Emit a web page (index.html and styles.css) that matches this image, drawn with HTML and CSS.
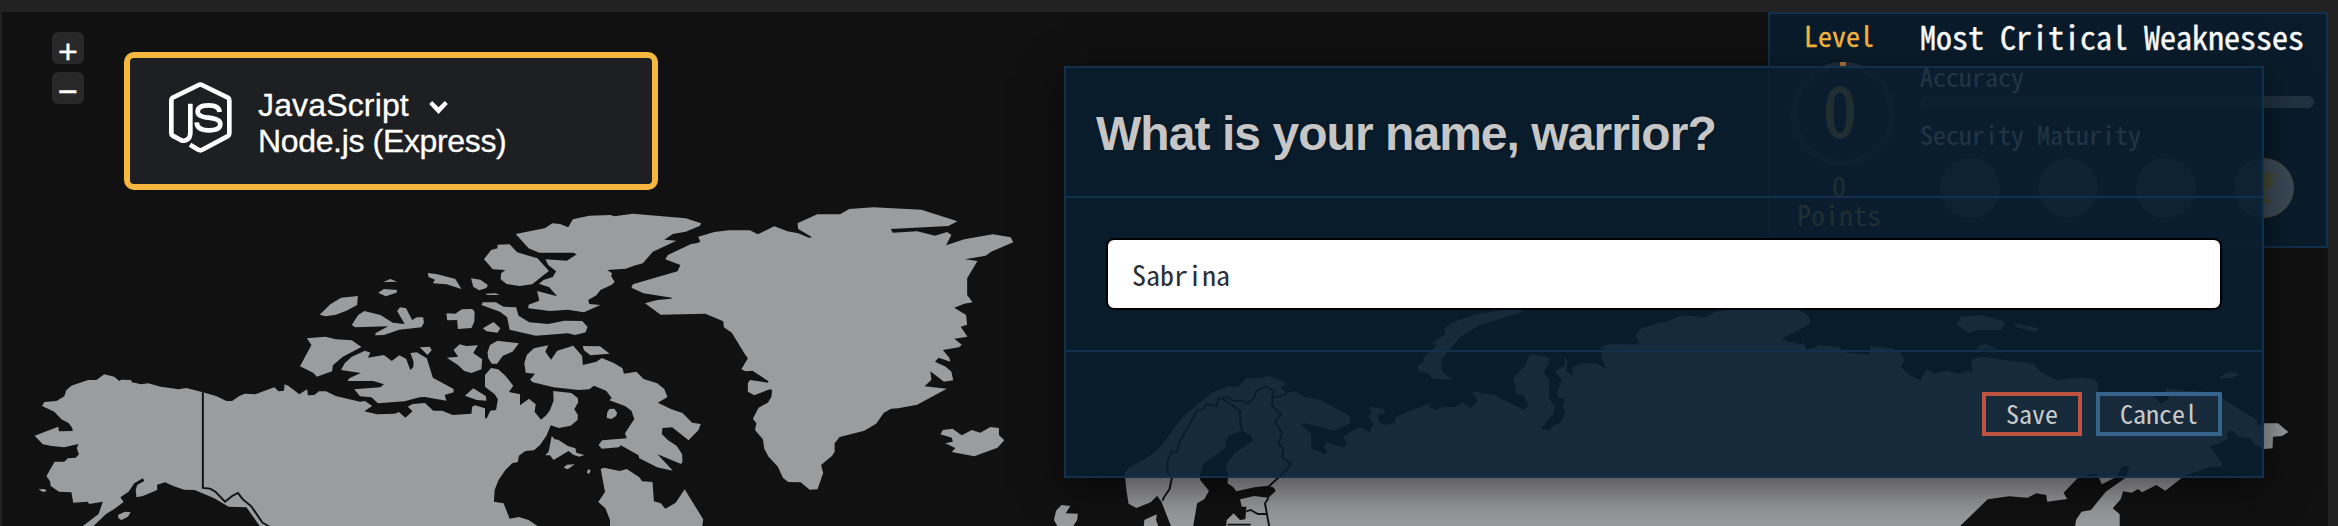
FILE: index.html
```html
<!DOCTYPE html>
<html lang="en">
<head>
<meta charset="utf-8">
<title>Warrior map</title>
<link rel="stylesheet" href="styles.css">
</head>
<body>
<main class="stage">
  <svg class="map" viewBox="0 0 2338 526" aria-hidden="true">
    <g transform="translate(0 190) scale(.357143 .333333)">
      <path class="land" d="M97,737 163,710 165,724 204,723 202,713 192,699 172,688 152,665 118,648 124,636 158,633 180,619 186,600 200,587 220,580 247,570 270,570 292,553 320,560 334,573 340,569 366,570 370,577 395,583 415,580 450,590 500,598 522,594 568,607 605,618 634,633 650,633 670,618 685,611 715,613 768,592 780,604 795,602 797,583 808,588 838,613 860,598 862,616 880,615 893,604 913,604 940,618 1008,635 1022,633 1042,648 1020,664 1055,673 1105,671 1117,666 1135,683 1155,664 1142,650 1155,642 1190,639 1213,662 1238,662 1268,675 1320,671 1322,650 1330,646 1358,655 1358,685 1363,685 1373,662 1389,660 1394,628 1385,613 1358,590 1358,555 1375,534 1395,538 1415,557 1437,587 1425,606 1456,613 1456,646 1481,626 1500,643 1497,666 1515,689 1530,675 1540,660 1550,632 1549,603 1600,609 1618,625 1619,637 1608,658 1618,675 1617,690 1598,707 1565,714 1542,706 1530,737 1512,765 1495,781 1471,783 1453,797 1450,816 1434,820 1415,840 1396,870 1385,900 1383,935 1410,940 1427,986 1453,981 1480,990 1505,1008 1505,1020 735,1020 712,985 690,952 640,950 600,925 545,900 516,899 485,888 462,877 440,884 440,900 400,918 382,922 380,900 384,885 404,873 400,865 376,880 360,905 337,922 346,936 320,957 297,972 262,1008 232,1008 276,972 288,935 250,942 245,935 235,936 205,938 200,907 165,905 142,888 140,874 130,858 153,815 180,815 190,805 212,803 221,793 215,775 220,762 180,772 145,768 120,763z
        M330,975 350,965 366,967 358,980 340,990 332,985z M108,898 125,897 131,903 120,906z
        M895,374 925,343 955,323 1002,318 1000,345 970,362 940,374 912,379z
        M1073,276 1093,267 1112,275z M1059,308 1075,297 1112,300 1110,308 1080,319z
        M985,405 1003,375 1020,363 1065,375 1100,398 1133,402 1112,363 1120,352 1137,355 1154,390 1167,382 1185,382 1187,398 1180,412 1118,419 1075,435 1050,436 1052,429 1087,409 995,412z
        M1198,249 1225,253 1275,267 1292,297 1250,283 1212,280 1218,269 1200,261z
        M1319,265 1345,269 1366,285 1362,294 1342,301 1325,290z M1359,311 1388,310 1399,315 1365,315z
        M1250,370 1275,371 1293,358 1322,357 1329,365 1328,395 1320,414 1282,417 1280,390 1252,391z
        M1352,415 1382,396 1401,415 1393,428 1362,424z
        M859,445 912,440 940,448 985,451 1012,471 960,500 932,526 930,544 887,560 878,549 840,529 872,465z
        M955,540 965,520 985,500 1022,482 1037,488 1030,503 1075,495 1097,513 1118,496 1137,506 1149,540 1157,532 1158,515 1149,489 1167,487 1195,505 1212,563 1270,597 1270,607 1245,615 1250,632 1190,621 1175,622 1133,634 1058,640 1040,622 1008,619 992,598 1010,596 1065,592 1075,583 1045,573 973,573 978,565 1010,549z
        M1175,472 1203,470 1209,480 1197,495z
        M1251,503 1283,500 1270,480 1287,463 1305,468 1338,466 1325,489 1350,508 1348,538 1320,549 1300,543 1282,525z
        M1365,487 1372,465 1393,452 1453,460 1435,485 1408,497 1392,521 1377,521 1367,505z
        M1302,617 1325,595 1360,618 1362,632 1335,630z
        M1355,208 1375,180 1393,175 1393,164 1427,163 1448,187 1505,205 1537,243 1490,283 1455,288 1418,282 1402,268 1403,250 1415,240 1380,238z
        M1348,345 1352,337 1388,337 1410,350 1445,352 1452,377 1482,397 1535,402 1580,392 1630,393 1645,410 1640,427 1610,435 1590,430 1500,437 1427,419 1420,382 1400,365z"/>
      <path class="border" d="M568,607V894L588,896 603,905 630,935 650,918 666,909 680,928 703,948 735,998 755,1010"/>
    </g>
    <g transform="translate(500 190) scale(.357143 .333333)">
      <path class="land" d="M44,132 125,115 147,100 168,102 191,112 204,88 250,77 310,75 320,79 372,71 520,85 563,100 560,107 520,125 484,132 460,149 494,152 428,185 400,220 375,227 352,236 300,240 314,250 311,258 321,276 312,285 281,300 270,316 247,330 250,342 281,345 235,367 190,359 140,363 79,355 80,344 110,332 104,303 160,319 138,292 109,281 122,270 148,261 157,244 135,225 127,208 187,212 215,193 205,188 110,188 80,175z
        M68,520 75,495 95,475 135,466 127,485 143,509 160,482 205,467 230,498 232,525 270,515 285,504 320,520 343,535 347,551 382,545 402,567 440,580 460,597 469,621 442,638 480,658 511,669 538,698 562,702 556,720 528,751 482,712 455,714 453,732 470,750 495,768 510,793 511,815 507,822 441,793 484,842 440,832 390,805 388,796 338,766 333,772 285,776 276,765 286,751 355,745 350,730 376,687 368,662 350,648 306,631 313,624 297,602 263,587 250,598 220,600 150,592 92,577 84,569 98,551 72,548z
        M232,468 280,469 307,491 253,496 235,481z M300,668 306,657 320,656 328,668 325,678 312,687 299,684z
        M127,796 136,785 145,737 153,748 163,749 190,768 211,775 214,788 236,795 222,800 205,794 192,783 150,810 140,796z
        M178,833 187,824 209,823 190,838z M243,847 247,838 254,841 249,853z
        M282,837 292,833 335,843 355,837 390,862 398,874 427,876 431,934 450,940 463,956 492,938 517,898 569,988 565,1020 308,1020 308,990 295,955 275,936 294,906z
        M406,340 450,374 575,371 625,394 627,412 649,428 684,490 694,505 676,538 687,544 707,542 752,574 750,578 700,570 694,580 694,605 712,616 755,598 762,600 760,620 750,638 724,653 708,686 718,700 714,720 736,748 740,776 752,800 778,830 792,863 807,876 842,877 867,899 889,898 905,849 899,825 930,797 937,785 937,760 951,741 1020,722 1053,701 1075,668 1095,656 1115,655 1168,644 1251,596 1189,589 1208,569 1205,544 1243,575 1269,571 1264,545 1248,530 1218,515 1228,503 1261,515 1258,503 1240,480 1285,472 1293,464 1272,446 1309,440 1290,410 1308,404 1305,375 1272,353 1300,341 1323,337 1308,315 1308,265 1337,213 1302,208 1360,197 1375,185 1437,157 1430,142 1380,133 1300,148 1249,166 1264,135 1252,126 1218,137 1168,124 1100,128 1094,117 1255,108 1281,94 1180,59 1045,52 978,57 952,73 888,73 833,100 835,117 874,142 865,143 835,130 805,124 768,109 722,133 700,121 640,121 600,126 555,140 561,155 550,160 535,162 470,195 463,208 505,225 497,244 372,283 368,293 402,310 481,323 480,326 440,330z
        M1233,733 1240,720 1267,716 1293,736 1321,720 1345,728 1373,711 1397,714 1397,735 1412,751 1393,773 1328,799 1265,786 1275,774 1247,760 1268,755 1265,743z"/>
    </g>
    <g transform="translate(1040 290) scale(.357143 .333333)">
      <path class="land" d="M1355,60 1350,66 1233,104 1175,142 1122,212 1127,245 1155,270 1097,266 1088,250 1060,242 1057,226 1073,220 1075,200 1110,167 1098,160 1137,132 1130,115 1165,93 1225,72 1300,60z
        M237,548 250,532 300,503 335,473 405,375 485,305 525,290 555,290 580,263 615,264 640,258 675,270 690,282 675,290 688,310 712,303 740,321 787,331 867,378 868,400 823,422 745,400 730,404 759,431 760,476 800,493 803,486 795,467 804,457 848,473 861,462 850,440 887,414 905,415 922,427 934,403 920,380 930,367 920,350 962,357 966,369 946,373 948,394 965,406 992,400 998,379 1098,337 1088,352 1110,360 1125,352 1165,350 1185,339 1207,355 1226,332 1211,310 1215,305 1270,315 1356,360 1368,345 1355,318 1334,310 1332,290 1325,265 1360,225 1368,200 1380,192 1425,203 1425,220 1411,247 1425,270 1425,325 1442,350 1435,375 1402,415 1425,423 1435,408 1455,400 1472,370 1463,350 1470,328 1450,322 1450,300 1462,272 1442,245 1470,225 1468,198 1477,212 1474,245 1495,258 1489,233 1517,220 1555,219 1568,229 1568,720 520,720 523,690 542,670 560,690 575,688 578,650 565,650 560,628 600,618 640,623 660,603 655,593 640,587 600,592 550,604 540,590 525,580 527,555 520,525 545,490 596,453 592,437 565,423 530,435 518,455 520,473 457,523 446,560 450,572 473,602 460,628 440,640 427,720 371,720 340,635 328,617 310,637 270,654 248,641 242,600z
        M290,720 292,690 305,683 327,673 325,690 335,720z
        M55,720 39,690 45,662 60,645 85,648 72,670 106,671 104,690 86,720z"/>
      <path class="border" d="M343,632 347,622 363,597 369,565 357,548 357,515 369,485 384,485 388,462 440,362 457,360 465,343 495,348 500,326 510,325 540,347 560,362 561,405 568,423 M510,325 522,318 540,332 565,332 583,339 597,327 607,301 633,290 655,303 650,325 690,312 M650,325V348L675,372 658,396 679,430 667,458 682,480 677,500 702,522 690,540 640,590 M640,623 630,640 635,670 642,710 M578,664 590,660 610,672 633,672 M525,704H590"/>
    </g>
    <g transform="translate(1560 290) scale(.49618 .333333)">
      <path class="land" d="M60,720 60,225 73,219 94,238 83,200 82,170 100,162 155,163 161,157 152,138 165,115 205,97 215,95 238,79 265,77 287,84 315,65 350,58 480,60 500,75 505,95 497,108 445,147 482,163 491,158 498,180 525,165 565,172 570,187 624,194 626,168 668,175 688,190 694,212 687,230 703,255 727,270 738,237 755,250 780,242 805,252 818,243 833,245 828,210 848,200 955,222 968,245 1000,270 1050,263 1075,267 1085,280 1084,308 1194,316 1212,342 1228,325 1220,310 1222,296 1260,302 1295,305 1330,320 1360,350 1405,390 1405,408 1418,400 1447,400 1468,426 1455,438 1437,440 1436,475 1419,477 1400,462 1392,445 1365,440 1360,425 1350,420 1343,432 1347,445 1330,460 1309,467 1333,518 1335,530 1310,530 1258,558 1220,602 1202,585 1173,607 1165,597 1152,608 1135,604 1130,628 1114,655 1128,673 1128,720 1037,720 1040,690 1051,665 1070,660 1100,605 1140,563 1148,528 1132,530 1122,560 1092,583 1082,550 1045,562 1015,608 1022,627 982,635 980,615 960,610 942,623 905,619 862,628 798,720z
        M800,103 808,80 850,76 897,96 890,119 842,120 823,129z M917,101 966,115 957,125 920,112z M838,178 848,165 860,162 880,178z M1330,260 1348,245 1371,253 1355,263 1332,265z"/>
    </g>
  </svg>

  <div class="toolbar">
    <div class="zoom">
      <button class="zoom-btn">+</button>
      <button class="zoom-btn">−</button>
    </div>
    <div class="lang-card">
      <svg class="node-icon" viewBox="27 30 189 213" fill="none" stroke="#fff" aria-hidden="true">
        <path stroke-width="14" d="M91,95V182C91,200 78,211 62,204L38,191Q34,188 34,182V85Q34,80 38,77L116,39Q121,36 126,39L204,77Q208,80 208,85V184Q208,189 204,192L127,233Q121,237 115,233L90,218"/>
        <path stroke-width="14" d="M179,120Q177,100 146,100Q113,100 113,119Q113,134 146,137Q181,141 181,156Q181,175 147,175Q111,175 110,151"/>
      </svg>
      <div class="lang-text">
        <div class="lang-name">JavaScript
          <svg class="chevron" viewBox="808 91 56 39" aria-hidden="true"><path fill="#fff" d="M808,100 817,91 836,110 855,91 864,100 836,130z"/></svg>
        </div>
        <div class="lang-framework">Node.js (Express)</div>
      </div>
    </div>
  </div>

  <aside class="hud">
    <div class="level">
      <div class="level-label">Level</div>
      <div class="ring"><span>0</span></div>
      <div class="points">0<br>Points</div>
    </div>
    <div class="stats">
      <div class="stats-title">Most Critical Weaknesses</div>
      <div class="stat-label">Accuracy</div>
      <div class="bar"></div>
      <div class="stat-label">Security Maturity</div>
      <div class="coins">
        <div class="coin"></div>
        <div class="coin"></div>
        <div class="coin"></div>
        <div class="coin">
          <svg class="trophy" viewBox="0 0 26 32" aria-hidden="true">
            <path fill="#4a4a35" d="M5,0H21V4C21,12 18,17 15,19V24Q15,27 20,28V31H6V28Q11,27 11,24V19C8,17 5,12 5,4z"/>
            <path fill="none" stroke="#4a4a35" stroke-width="1.6" d="M5,3H1C1,9 4,13 8,15M21,3H25C25,9 22,13 18,15"/>
          </svg>
        </div>
      </div>
    </div>
  </aside>

  <section class="modal">
    <header class="modal-head"><h1 class="modal-title">What is your name, warrior?</h1></header>
    <div class="modal-body"><input class="name-input" type="text" value="Sabrina"></div>
    <footer class="modal-foot">
      <button class="btn btn-save">Save</button>
      <button class="btn btn-cancel">Cancel</button>
    </footer>
  </section>
</main>
</body>
</html>
```
FILE: styles.css
```css
* { box-sizing: border-box; }

body {
  margin: 0;
  height: 526px;
  overflow: hidden;
  background: #222;
  padding: 12px 10px 0 2px;
  font-family: "Liberation Sans", Arial, sans-serif;
  color: #fff;
}

.stage {
  height: 514px;
  background: #111;
  display: flex;
  justify-content: space-between;
  align-items: flex-start;
}

/* world map backdrop */
.map { position: absolute; left: 0; top: 0; width: 2338px; height: 526px; }
.land { fill: #9b9c9e; }
.border { fill: none; stroke: #111; stroke-width: 5.5; }

/* the panels lie over the map */
.toolbar, .hud { position: relative; }

.toolbar { display: flex; gap: 40px; padding: 20px 0 0 50px; }
.zoom { display: flex; flex-direction: column; gap: 8px; }
.zoom-btn {
  width: 32px;
  height: 32px;
  padding: 5px 0 0;
  border: 0;
  border-radius: 6px;
  background: #292929;
  color: #fff;
  font: 34px/28px "Liberation Sans", Arial, sans-serif;
  -webkit-text-stroke: .4px #fff;
}

.lang-card {
  width: 534px;
  height: 138px;
  margin-top: 20px;
  padding: 24px 39px;
  display: flex;
  align-items: flex-start;
  gap: 26px;
  background: #1e1f23;
  border: 6px solid #f6b73f;
  border-radius: 10px;
}
.node-icon { width: 63px; height: 71px; }
.lang-text { font-size: 32px; line-height: 36px; padding-top: 5px; -webkit-text-stroke: .3px #fff; }
.lang-name { display: flex; align-items: center; gap: 20px; letter-spacing: .15px; }
.lang-framework { letter-spacing: -.35px; }
.chevron { width: 19px; height: 13px; margin-top: 5px; }

/* score panel */
.hud {
  width: 560px;
  height: 236px;
  display: flex;
  background: #0a1c2b;
  border: 2px solid #11304c;
  font-family: "Noto Sans Mono CJK JP", "Liberation Mono", monospace;
}
.level { width: 150px; padding: 5px 12px 0 0; color: #f6b73f; text-align: center; font-size: 28px; }
.level-label { line-height: 32px; -webkit-text-stroke: .3px; }
.ring {
  width: 104px;
  height: 104px;
  margin: 11px 0 0 21px;
  border: 6px solid #223240;
  border-radius: 50%;
  font-size: 68px;
  line-height: 80px;
  position: relative;
  -webkit-text-stroke: 1.5px;
}
.ring::before { content: ""; position: absolute; left: 43px; top: -6px; width: 6px; height: 6px; background: #b5792e; }
.ring span { position: relative; left: -3px; }
.points { margin-top: 5px; line-height: 29px; }

.stats { padding: 4px 12px 0 0; width: 406px; }
.stats-title { font-size: 32px; line-height: 36px; white-space: nowrap; -webkit-text-stroke: .4px; }
.stat-label { font-size: 26px; line-height: 30px; }
.stats-title + .stat-label { margin-top: 7px; }
.bar { height: 12px; margin: 5px 0 11px; border-radius: 6px; background: #223240; }
.coins { display: flex; justify-content: space-between; padding: 9px 20px 0; }
.coin {
  width: 60px;
  height: 60px;
  display: flex;
  align-items: center;
  justify-content: center;
  border: 1px solid #47493a;
  border-radius: 50%;
  background: #3c4b58;
}
.trophy { width: 26px; height: 32px; }

/* name dialog floats over the map and the score panel */
.modal {
  position: absolute;
  left: 1064px;
  top: 66px;
  width: 1200px;
  height: 412px;
  display: flex;
  flex-direction: column;
  background: rgba(9, 30, 48, .9);
  background-clip: padding-box;
  border: 2px solid #11304c;
  box-shadow: 0 10px 40px rgba(0, 0, 0, .55);
}
.modal-head { height: 130px; padding: 42px 30px 0; border-bottom: 2px solid #11304c; }
.modal-title {
  margin: 0;
  font-size: 48px;
  line-height: 48px;
  letter-spacing: -.95px;
  color: #c6c6c6;
  text-shadow: 0 0 3px rgba(0, 0, 0, .5);
}
.modal-body { height: 154px; padding: 40px; border-bottom: 2px solid #11304c; }
.name-input {
  width: 1116px;
  height: 72px;
  padding: 0 24px 1px;
  border: 2px solid #000;
  border-radius: 8px;
  background: #fff;
  color: #2b2e35;
  font: 28px "Noto Sans Mono CJK JP", "Liberation Mono", monospace;
}
.modal-foot { display: flex; justify-content: flex-end; gap: 14px; padding: 40px; }
.btn {
  height: 44px;
  padding: 0 20px 2px;
  border: 4px solid;
  background: transparent;
  color: #c8c9c9;
  font: 26px/34px "Noto Sans Mono CJK JP", "Liberation Mono", monospace;
}
.btn-save { border-color: #bd5440; }
.btn-cancel { border-color: #34648c; }
```
